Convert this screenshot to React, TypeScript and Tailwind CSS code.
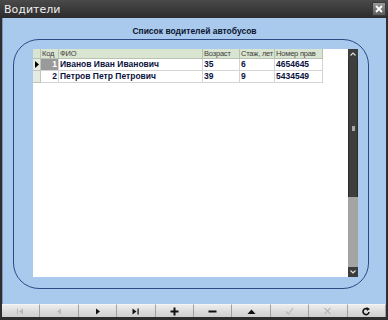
import React from "react";

const cols = [
  { label: "Код", w: 18, align: "right" },
  { label: "ФИО", w: 144, align: "left" },
  { label: "Возраст", w: 37, align: "left" },
  { label: "Стаж, лет", w: 35, align: "left" },
  { label: "Номер прав", w: 48, align: "left" },
];

const rows = [
  ["1", "Иванов Иван Иванович", "35", "6", "4654645"],
  ["2", "Петров Петр Петрович", "39", "9", "5434549"],
];

function Icon({ name, disabled }: { name: string; disabled?: boolean }) {
  const c = disabled ? "#b8b8b8" : "#111";
  switch (name) {
    case "first":
      return (
        <svg width="9" height="7" viewBox="0 0 9 7">
          <rect x="1" y="0.5" width="1" height="6" fill={c} />
          <path d="M7 0.5 L3 3.5 L7 6.5 Z" fill={c} />
        </svg>
      );
    case "prev":
      return (
        <svg width="9" height="7" viewBox="0 0 9 7">
          <path d="M6 0.5 L2 3.5 L6 6.5 Z" fill={c} />
        </svg>
      );
    case "next":
      return (
        <svg width="9" height="7" viewBox="0 0 9 7">
          <path d="M3 0.5 L7 3.5 L3 6.5 Z" fill={c} />
        </svg>
      );
    case "last":
      return (
        <svg width="9" height="7" viewBox="0 0 9 7">
          <path d="M1.5 0.5 L5.5 3.5 L1.5 6.5 Z" fill={c} />
          <rect x="6.5" y="0.5" width="1.2" height="6" fill={c} />
        </svg>
      );
    case "plus":
      return (
        <svg width="9" height="9" viewBox="0 0 9 9">
          <rect x="3.5" y="0.5" width="2" height="8" fill={c} />
          <rect x="0.5" y="3.5" width="8" height="2" fill={c} />
        </svg>
      );
    case "minus":
      return (
        <svg width="9" height="9" viewBox="0 0 9 9">
          <rect x="0.5" y="3.5" width="8" height="2" fill={c} />
        </svg>
      );
    case "up":
      return (
        <svg width="9" height="7" viewBox="0 0 9 7">
          <path d="M0.5 6 L4.5 1.5 L8.5 6 Z" fill={c} />
        </svg>
      );
    case "check":
      return (
        <svg width="9" height="8" viewBox="0 0 9 8">
          <path d="M1 4.5 L3.5 7 L8 1" stroke={c} strokeWidth="1.2" fill="none" />
        </svg>
      );
    case "cancel":
      return (
        <svg width="9" height="8" viewBox="0 0 9 8">
          <path d="M1.5 1 L7.5 7 M7.5 1 L1.5 7" stroke={c} strokeWidth="1.2" fill="none" />
        </svg>
      );
    case "refresh":
      return (
        <svg width="9" height="9" viewBox="0 0 9 9">
          <path d="M7 5 A3 3 0 1 1 5.5 2" stroke={c} strokeWidth="1.6" fill="none" />
          <path d="M4.5 0 L8 2 L5 4 Z" fill={c} />
        </svg>
      );
  }
  return null;
}

const buttons: { name: string; disabled?: boolean }[] = [
  { name: "first", disabled: true },
  { name: "prev", disabled: true },
  { name: "next" },
  { name: "last" },
  { name: "plus" },
  { name: "minus" },
  { name: "up" },
  { name: "check", disabled: true },
  { name: "cancel", disabled: true },
  { name: "refresh" },
];

export default function App() {
  return (
    <div
      className="w-[388px] h-[320px] bg-[#2e2e2e] flex flex-col overflow-hidden"
      style={{ fontFamily: "'Liberation Sans', sans-serif" }}
    >
      {/* Title bar */}
      <div className="h-[18px] flex items-center justify-between bg-gradient-to-b from-[#4a4a4a] to-[#2c2c2c] pl-[4px] pr-[2px]">
        <span className="text-[11px] text-[#f0f0f0] leading-none" style={{ fontFamily: "'DejaVu Sans', sans-serif" }}>
          Водители
        </span>
        <div className="w-[14px] h-[14px] bg-gradient-to-b from-[#9a9a9a] to-[#5a5a5a] flex items-center justify-center border border-[#3a3a3a]">
          <svg width="8" height="8" viewBox="0 0 8 8">
            <path d="M1 1 L7 7 M7 1 L1 7" stroke="#fff" strokeWidth="1.8" />
          </svg>
        </div>
      </div>

      {/* Body */}
      <div className="flex-1 mx-[2px] bg-[#a9c9ed] border-l border-[#7f96b5] flex flex-col pt-[7px]">
        <div className="text-center text-[8.5px] leading-[12px] font-bold text-[#0c1630]">
          Список водителей автобусов
        </div>
        <div className="ml-[10px] mt-[2px] w-[356px] h-[250px] rounded-[26px] border border-[#2d4a85] pt-[9px] pl-[19px]">
          <div className="w-[325px] h-[228px] bg-white flex">
            <div className="w-[315px] flex flex-col text-[8px]">
              {/* header */}
              <div className="flex h-[10px]">
                <div className="w-[8px] bg-[#d9e4d1] border-r border-b border-[#b8c2b2]" />
                {cols.map((c) => (
                  <div
                    key={c.label}
                    className="bg-[#d9e4d1] border-r border-b border-[#b8c2b2] text-[#404040] text-[7.5px] tracking-[-0.2px] leading-[9px] pl-[1px] whitespace-nowrap"
                    style={{ width: c.w }}
                  >
                    {c.label}
                  </div>
                ))}
              </div>
              {rows.map((r, i) => (
                <div key={i} className="flex h-[12px]">
                  <div className="w-[8px] bg-[#e6ebe2] border-r border-b border-[#c0c6bc] flex items-center justify-center">
                    {i === 0 && (
                      <svg width="4" height="7" viewBox="0 0 4 7">
                        <path d="M0 0 L4 3.5 L0 7 Z" fill="#000" />
                      </svg>
                    )}
                  </div>
                  {r.map((v, j) => (
                    <div
                      key={j}
                      className={
                        "border-r border-b border-[#d4d4d4] leading-[11px] text-[8.5px] px-[1px] font-bold whitespace-nowrap overflow-hidden " +
                        (j === 0 ? "text-right " : "") +
                        (i === 0 && j === 0 ? "bg-[#9a9a9a] text-white" : "text-[#0c1240]")
                      }
                      style={{ width: cols[j].w }}
                    >
                      {v}
                    </div>
                  ))}
                </div>
              ))}
            </div>
            {/* scrollbar */}
            <div className="ml-auto w-[10px] h-full flex flex-col">
              <div className="h-[10px] bg-[#3c3c3c] flex items-center justify-center">
                <svg width="6" height="4" viewBox="0 0 6 4">
                  <path d="M0.5 3.5 L3 1 L5.5 3.5" stroke="#e0e0e0" strokeWidth="1.2" fill="none" />
                </svg>
              </div>
              <div className="h-[138px] bg-[#3e3e3e] border-x border-[#2c2c2c] flex items-center justify-center">
                <div className="w-[3px] h-[5px] bg-[#a8a8a8]" />
              </div>
              <div className="flex-1 bg-[#a4a4a4]" />
              <div className="h-[10px] bg-[#3c3c3c] flex items-center justify-center">
                <svg width="6" height="4" viewBox="0 0 6 4">
                  <path d="M0.5 0.5 L3 3 L5.5 0.5" stroke="#e0e0e0" strokeWidth="1.2" fill="none" />
                </svg>
              </div>
            </div>
          </div>
        </div>
      </div>

      {/* Toolbar */}
      <div className="h-[13px] mx-[2px] flex bg-[#d6d6d6]">
        {buttons.map((b, i) => (
          <div
            key={i}
            className="flex-1 flex items-center justify-center bg-gradient-to-b from-[#ececec] to-[#cfcfcf] border-r border-[#a0a0a0] border-t border-t-[#f4f4f4]"
          >
            <Icon name={b.name} disabled={b.disabled} />
          </div>
        ))}
      </div>
      <div className="h-[3px] bg-[#2e2e2e]" />
    </div>
  );
}
